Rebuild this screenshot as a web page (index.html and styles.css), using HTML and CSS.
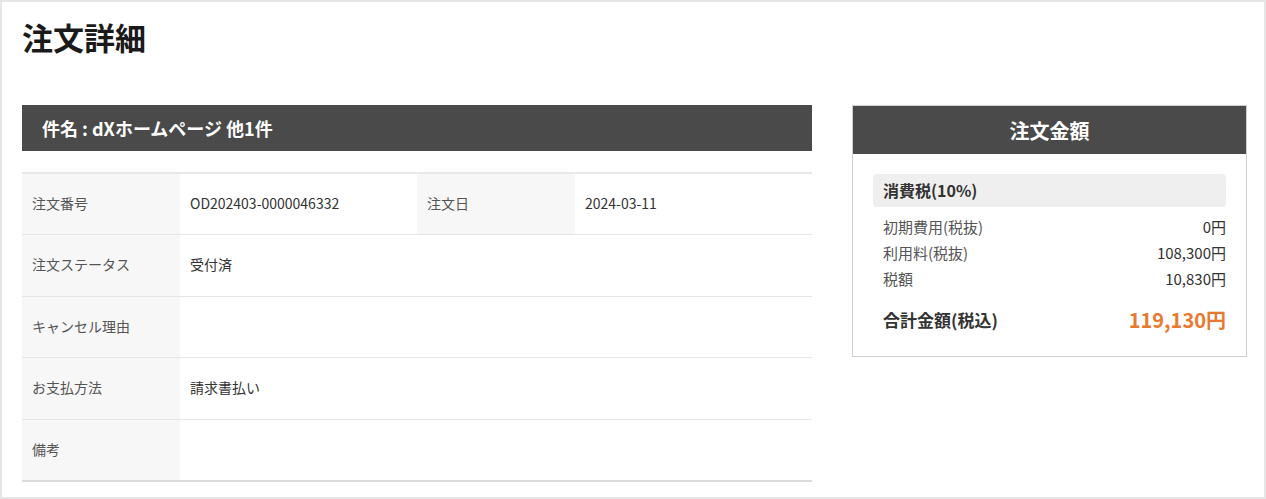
FILE: index.html
```html
<!DOCTYPE html>
<html lang="ja">
<head>
    <meta charset="UTF-8">
    <meta name="viewport" content="width=device-width, initial-scale=1.0">
    <title>注文詳細</title>
    <link rel="stylesheet" href="styles.css">
</head>
<body>
    <div class="page">
        <h1 class="page-title">注文詳細</h1>

        <div class="layout">
            <div class="order-detail">
                <div class="detail-head">
                    <h3>件名 : dXホームページ 他1件</h3>
                </div>
                <table class="detail-table">
                    <colgroup>
                        <col class="col-label">
                        <col class="col-value">
                        <col class="col-label">
                        <col class="col-value">
                    </colgroup>
                    <tr>
                        <th>注文番号</th>
                        <td>OD202403-0000046332</td>
                        <th>注文日</th>
                        <td>2024-03-11</td>
                    </tr>
                    <tr>
                        <th>注文ステータス</th>
                        <td colspan="3">受付済</td>
                    </tr>
                    <tr>
                        <th>キャンセル理由</th>
                        <td colspan="3"></td>
                    </tr>
                    <tr>
                        <th>お支払方法</th>
                        <td colspan="3">請求書払い</td>
                    </tr>
                    <tr>
                        <th>備考</th>
                        <td colspan="3"></td>
                    </tr>
                </table>
            </div>

            <div class="price-box">
                <div class="price-head">注文金額</div>
                <div class="price-body">
                    <div class="tax-title">消費税(10%)</div>
                    <div class="price-rows">
                        <div class="price-row">
                            <span>初期費用(税抜)</span>
                            <span>0円</span>
                        </div>
                        <div class="price-row">
                            <span>利用料(税抜)</span>
                            <span>108,300円</span>
                        </div>
                        <div class="price-row">
                            <span>税額</span>
                            <span>10,830円</span>
                        </div>
                    </div>
                    <div class="price-total">
                        <span>合計金額(税込)</span>
                        <span class="total-value">119,130円</span>
                    </div>
                </div>
            </div>
        </div>
    </div>
</body>
</html>
```

FILE: styles.css
```css
html, body {
    margin: 0;
    padding: 0;
    background-color: white;
}

body {
    font-family: "Noto Sans CJK JP", "Noto Sans", sans-serif;
    color: #333;
}

.page {
    height: 499px;
    padding: 12px 16px 0 20px;
    border: 2px solid #e6e6e6;
    box-sizing: border-box;
}

.page-title {
    margin: 0;
    font-size: 31px;
    line-height: 45px;
    font-weight: bold;
    color: #1a1a1a;
}

.layout {
    display: flex;
    align-items: flex-start;
    gap: 40px;
    margin-top: 46px;
}

.order-detail {
    width: 790px;
    flex-shrink: 0;
}

.detail-head {
    background: #4a4a4a;
    height: 46px;
    display: flex;
    align-items: center;
    padding: 0 20px;
    box-sizing: border-box;
}

.detail-head h3 {
    margin: 0;
    font-size: 18px;
    font-weight: bold;
    color: white;
}

.detail-table {
    width: 100%;
    margin-top: 21px;
    border-collapse: collapse;
    table-layout: fixed;
    border-top: 2px solid #e8e8e8;
    border-bottom: 2px solid #dcdcdc;
    font-size: 14px;
}

.col-label {
    width: 20%;
}

.col-value {
    width: 30%;
}

.detail-table tr {
    border-bottom: 1px solid #e6e6e6;
}

.detail-table tr:last-child {
    border-bottom: none;
}

.detail-table th,
.detail-table td {
    height: 61.5px;
    padding: 0 10px 2px 10px;
    text-align: left;
    font-weight: normal;
    box-sizing: border-box;
}

.detail-table th {
    background: #f7f7f7;
    color: #555;
}

.detail-table td {
    color: #333;
}

.price-box {
    width: 395px;
    flex-shrink: 0;
    border: 1px solid #cfcfcf;
    box-sizing: border-box;
}

.price-head {
    background: #4a4a4a;
    height: 48px;
    display: flex;
    align-items: center;
    justify-content: center;
    font-size: 20px;
    font-weight: bold;
    color: white;
}

.price-body {
    padding: 20px 20px 22px 20px;
}

.tax-title {
    background: #efefef;
    border-radius: 4px;
    height: 33px;
    line-height: 33px;
    padding: 0 10px;
    font-size: 16px;
    font-weight: bold;
    color: #333;
}

.price-rows {
    margin-top: 7px;
    padding-left: 10px;
}

.price-row {
    display: flex;
    justify-content: space-between;
    font-size: 15px;
    line-height: 26px;
    color: #555;
}

.price-row span:last-child {
    color: #333;
}

.price-total {
    display: flex;
    justify-content: space-between;
    align-items: center;
    margin-top: 12px;
    padding-left: 10px;
    height: 30px;
    font-size: 17px;
    font-weight: bold;
    color: #333;
}

.total-value {
    font-size: 20px;
    color: #e8792f;
}
```
